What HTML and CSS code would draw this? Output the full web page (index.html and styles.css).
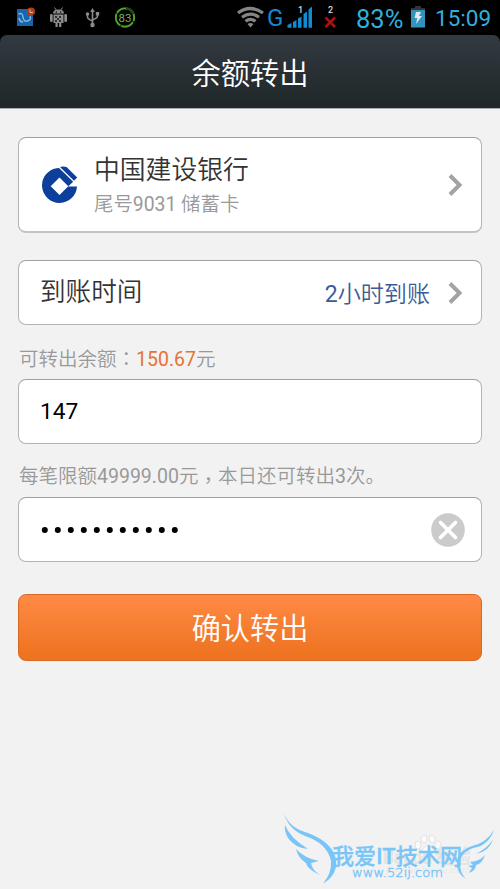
FILE: index.html
```html
<!DOCTYPE html>
<html lang="zh-CN">
<head>
<meta charset="utf-8">
<title>余额转出</title>
<link rel="stylesheet" href="styles.css">
</head>
<body>
<div class="status">
  <svg class="tray" width="140" height="35" viewBox="0 0 140 35">
    <rect x="17" y="9" width="16" height="17" fill="#1765ad"/>
    <path d="M18.500 14q4-2 4.500 3t4.500 4q4-1 2.500-5M19 18q1 4 4 4" fill="none" stroke="#85bce0" stroke-width="1.400"/>
    <circle cx="31" cy="11.500" r="4" fill="#b43c16"/>
    <path d="M30 9.500v3h3" fill="none" stroke="#e0b2a0" stroke-width="1"/>
    <g fill="#8c8c8c">
      <path d="M53 13.500q0-4 5.500-4t5.500 4zM53.500 14.500h10v8.500h-2.200v4h-2.200v-4h-1.400v4h-2.200v-4h-2z"/>
      <rect x="50" y="14" width="2.700" height="8" rx="1.300"/>
      <rect x="64.300" y="14" width="2.700" height="8" rx="1.300"/>
      <path d="M54.500 7.500l2 3M62.500 7.500l-2 3" stroke="#8c8c8c"/>
    </g>
    <path d="M55 16h2v2h-2zM59 16h2v2h-2zM57 18h2v2h-2zM55 20h2v2h-2zM59 20h2v2h-2z" fill="#303030"/>
    <circle cx="56.300" cy="12" r=".7"/><circle cx="60.700" cy="12" r=".7"/>
    <g fill="none" stroke="#8c8c8c" stroke-width="1.600">
      <path d="M92.500 11v14M87.500 14v3q0 2 5 4M97.500 13v3q0 2-5 4"/>
    </g>
    <path d="M92.500 8l2.300 4h-4.600zM95.800 12h3.400v3.400h-3.400z" fill="#8c8c8c"/>
    <circle cx="87.500" cy="14" r="1.800" fill="#8c8c8c"/><circle cx="92.500" cy="25" r="2.200" fill="#8c8c8c"/>
    <circle cx="125" cy="17.500" r="9.200" fill="none" stroke="#1d4a15" stroke-width="1.800"/>
    <circle cx="125" cy="17.500" r="9.200" fill="none" stroke="#4fa82b" stroke-width="1.800" stroke-dasharray="12.500 1.600" pathLength="56.500" stroke-dashoffset="-5"/>
    <path d="M126 8.300a9.200 9.200 0 0 1 7.700 6" fill="none" stroke="#1d4a15" stroke-width="2.400"/>
    <text class="tray-level" x="125" y="21.500" text-anchor="middle">83</text>
  </svg>
  <svg class="signal" width="106" height="35" viewBox="0 0 106 35">
    <g fill="none" stroke="#858585" stroke-width="3.200">
      <path d="M2 13q12-9 25 0M6 17.200q8.500-6 17 0M9.500 21.200q5-3.800 10 0"/>
    </g>
    <path d="M11.500 24q3-2 6 0l-3 3.500z" fill="#858585"/>
    <text class="network" x="31" y="26">G</text>
    <path d="M51.500 25l4-2v4.800h-4zM57 22l3.500-2v7.800H57zM62 18.500l3.500-2v11.300H62zM67.500 14l3.500-2.500v16.300h-3.500zM72.500 9.500l3.500-3v21.300h-3.500z" fill="#118bd3"/>
    <text class="sim" x="62" y="13">1</text>
    <text class="sim" x="92" y="13">2</text>
    <path d="M89.500 17.500l9.500 9.500M99 17.500l-9.500 9.500" stroke="#b30d0d" stroke-width="2.600"/>
  </svg>
  <span class="percent">83%</span>
  <svg class="battery" width="14" height="35" viewBox="0 0 14 35">
    <path d="M4 6h6v2h4v3H0V8h4z" fill="#343434"/>
    <path d="M0 10h14v17.500H0z" fill="#3294bb"/>
    <path d="M5 12h5l-2 4h3l-6 8 1.300-6H3.500z" fill="#ddeaf0"/>
  </svg>
  <span class="clock">15:09</span>
</div>
<header class="header">余额转出</header>
<main class="main">
  <section class="box bank">
    <svg class="logo" width="36" height="38" viewBox="0 0 36 38">
      <path fill="#0c3e9b" fill-rule="evenodd" d="M14.500 2.200L17 2 31.200 15.800 26 20.500H35A17.500 17.500 0 1 1 14.500 2.200zM17.500 11.500L8.700 20.300 17.500 29.100 26.300 20.300z"/>
      <path fill="#0c3e9b" d="M18 1q3-1 6.500 0L35.200 11.500 32 14.800z"/>
    </svg>
    <div class="account">
      <div class="bank-name">中国建设银行</div>
      <div class="card-no">尾号<span class="num">9031</span> 储蓄卡</div>
    </div>
    <svg class="arrow" width="16" height="24" viewBox="0 0 16 24"><path d="M2 2.500l9.500 9.500L2 21.500" fill="none" stroke="#a3a3a3" stroke-width="4"/></svg>
  </section>
  <section class="box arrival">
    <span class="arrival-label">到账时间</span>
    <span class="arrival-value"><span class="num">2</span>小时到账</span>
    <svg class="arrow" width="16" height="24" viewBox="0 0 16 24"><path d="M2 2.500l9.500 9.500L2 21.500" fill="none" stroke="#a3a3a3" stroke-width="4"/></svg>
  </section>
  <p class="hint">可转出余额<span class="mid" lang="zh-TW">：</span><span class="num amount">150.67</span>元</p>
  <div class="box field">147</div>
  <p class="hint limit">每笔限额<span class="num">49999.00</span>元<span class="mid comma" lang="zh-TW">，</span>本日还可转出<span class="num">3</span>次。</p>
  <div class="box field">
    <svg class="dots" width="142" height="8" viewBox="0 0 142 8">
      <path d="M4.800 4H134.900" stroke="#000" stroke-width="6" stroke-linecap="round" stroke-dasharray="0 13"/>
    </svg>
    <svg class="clear" width="34" height="34" viewBox="0 0 34 34"><circle cx="17" cy="17" r="16.800" fill="#cbcbcb"/><path d="M9.500 9.500l15 15M24.500 9.500l-15 15" stroke="#fff" stroke-width="3.700" stroke-linecap="round"/></svg>
  </div>
  <div class="submit">确认转出</div>
</main>
<svg class="watermark" width="230" height="89" viewBox="0 0 230 89">
  <g fill="#fafafa" stroke="#e2e2e2">
    <ellipse cx="148" cy="45" rx="3" ry="4"/><ellipse cx="154" cy="39" rx="3" ry="4"/><ellipse cx="162" cy="39" rx="3" ry="4"/><ellipse cx="168" cy="45" rx="3" ry="4"/>
    <path d="M158 45q-3 0-8 8-1 5 8 4 9 1 8-4-5-8-8-8z"/>
  </g>
  <text class="mark-under" x="113" y="64" textLength="88" lengthAdjust="spacingAndGlyphs">Bai du 经验</text>
  <text class="mark-url-under" x="116" y="73" textLength="84">jingyan.baidu.com</text>
  <g fill="#79c5f8">
    <path d="M14 13Q19 28 38 33Q62 42 66 59Q68 75 53 83.500Q62 73 61 61Q57 43 35 36Q18 29 14 13z"/>
    <path d="M15 25Q20 38 38 49Q25 48 18 38Q14 31 15 25z"/>
    <path d="M26 49Q34 58 49 61L41 63Q42 70 50 75Q37 69 36 63Q28 58 26 49z"/>
    <path d="M224 30Q218 46 203 48Q189 54 190 64Q190 73 196 79Q186 73 187 62Q188 51 202 46Q216 43 224 30z"/>
    <path d="M223 39Q220 51 206 54Q219 47 223 39z"/>
    <path d="M215 55Q212 64 206 65Q206 70 199 73L202 68 198 66 203 65 200 62Q210 61 215 55z"/>
  </g>
  <text class="mark" x="62" y="64" textLength="130" lengthAdjust="spacingAndGlyphs">我爱IT技术网</text>
  <text class="mark-url" x="82" y="77" textLength="91" lengthAdjust="spacingAndGlyphs">www.52ij.com</text>
</svg>
</body>
</html>
```

FILE: styles.css
```css
* { box-sizing: border-box; }

body {
  margin: 0;
  width: 500px;
  height: 889px;
  overflow: hidden;
  background: #000;
  font-family: Roboto, "Noto Sans CJK SC", sans-serif;
  font-weight: 350;
  display: flex;
  flex-direction: column;
}

svg { display: block; flex: none; }
.num { font-weight: 400; }

.status {
  height: 35px;
  flex: none;
  display: flex;
  color: #32aede;
  font-weight: 400;
  line-height: 36px;
  white-space: nowrap;
}
.signal { margin-left: 96px; }
.tray-level { font-size: 11.5px; fill: #6fb55b; }
.network { font-size: 24px; fill: #118bd3; }
.sim { font-size: 9px; font-weight: 500; fill: #ddd; }
.percent { width: 54px; margin-left: 14px; font-size: 25.5px; line-height: 38px; }
.battery { margin-left: 1px; }
.clock { margin-left: 10px; font-size: 22.5px; }

.header {
  height: 74px;
  flex: none;
  border-radius: 7px 7px 0 0;
  border-bottom: 1px solid #a7acae;
  background: linear-gradient(#323941, #202728);
  color: #fff;
  font-size: 29.3px;
  line-height: 79px;
  text-align: center;
}

.main {
  flex: 1;
  padding: 28px 18px 0;
  background: #f2f2f2;
}

.box {
  display: flex;
  align-items: center;
  height: 65px;
  border: 1px solid #b3b3b3;
  border-top-color: #a0a0a0;
  border-radius: 8px;
  background: #fff;
}

.bank {
  height: 96px;
  margin-bottom: 27px;
  padding: 0 17px 0 23px;
  border-bottom: 2px solid #c3c3c3;
}
.account { flex: 1; margin-left: 16px; padding-top: 4px; }
.bank-name { height: 35px; font-size: 25.8px; line-height: 35px; color: #333; }
.card-no { height: 32px; font-size: 19.4px; line-height: 33px; color: #999; }

.arrival { padding: 0 17px 0 21px; }
.arrival-label { flex: 1; font-size: 25.6px; line-height: 61px; color: #333; }
.arrival-value { margin-right: 18px; padding-bottom: 2px; font-size: 23.1px; color: #3d5b94; }

.hint {
  height: 54px;
  margin: 0;
  padding: 11px 0 0 1px;
  font-size: 19.5px;
  line-height: 43px;
  color: #999;
  white-space: nowrap;
}
.limit { height: 53px; }
.mid { font-family: "Noto Sans CJK TC", sans-serif; }
.comma { display: inline-block; transform: translateY(5px); line-height: 1; }
.amount { color: #e67334; }

.field {
  padding: 0 16px 0 21px;
  font-size: 22.7px;
  font-weight: 400;
  color: #000;
}
.clear { margin-left: auto; }

.submit {
  height: 67px;
  margin-top: 32px;
  border: 1px solid #d86925;
  border-radius: 8px;
  background: linear-gradient(#ff8a45, #ef7422 90%);
  color: #fff;
  font-size: 29.2px;
  line-height: 68px;
  text-align: center;
}

.watermark { position: absolute; left: 270px; top: 800px; }
.mark { font-size: 22px; font-weight: 500; fill: #79c5f8; stroke: #79c5f8; stroke-width: .3px; }
.mark-url { font-family: "DejaVu Sans", sans-serif; font-size: 12px; fill: #79c5f8; stroke: #79c5f8; stroke-width: .4px; }
.mark-under { font-size: 20px; font-weight: 700; fill: #e4e4e4; }
.mark-url-under { font-size: 9px; fill: #e4e4e4; }
```
